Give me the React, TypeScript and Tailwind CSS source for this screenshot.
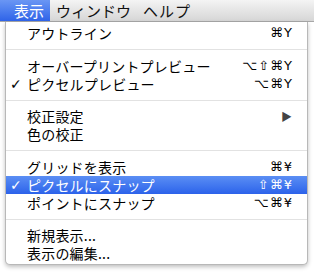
import { Fragment } from 'react';

type Item =
  | { kind: 'sep'; h: number }
  | { kind: 'row'; label: string; key?: string; check?: boolean; active?: boolean; sub?: boolean };

const items: Item[] = [
  { kind: 'row', label: 'アウトライン', key: '⌘Y' },
  { kind: 'sep', h: 15 },
  { kind: 'row', label: 'オーバープリントプレビュー', key: '⌥⇧⌘Y' },
  { kind: 'row', label: 'ピクセルプレビュー', key: '⌥⌘Y', check: true },
  { kind: 'sep', h: 14 },
  { kind: 'row', label: '校正設定', sub: true },
  { kind: 'row', label: '色の校正' },
  { kind: 'sep', h: 15 },
  { kind: 'row', label: 'グリッドを表示', key: '⌘¥' },
  { kind: 'row', label: 'ピクセルにスナップ', key: '⇧⌘¥', check: true, active: true },
  { kind: 'row', label: 'ポイントにスナップ', key: '⌥⌘¥' },
  { kind: 'sep', h: 14 },
  { kind: 'row', label: '新規表示...' },
  { kind: 'row', label: '表示の編集...' },
];

const jp = "font-['Lucida_Grande','Noto_Sans_CJK_JP',sans-serif]";

export default function App() {
  return (
    <div className={`relative w-[314px] h-[275px] overflow-hidden bg-white ${jp}`}>
      {/* ── Menu bar ─────────────────────────────────────────── */}
      <div className="flex h-[22px] items-center bg-gradient-to-b from-[#f4f4f4] to-[#d6d6d6] border-b border-[#a8a8a8] text-[15px] leading-[21px] text-[#111]">
        <div className="flex h-full items-center bg-gradient-to-b from-[#6a96f4] to-[#2f63e8] pl-[14px] pr-[6px] text-white">
          表示
        </div>
        <div className="pl-[6px]">ウィンドウ</div>
        <div className="pl-[12px] tracking-[1px]">ヘルプ</div>
      </div>

      {/* ── Dropdown ─────────────────────────────────────────── */}
      <div className="ml-[5px] w-[303px] h-[243px] pt-[2px] bg-white border-x border-b border-[#b8b8b8] rounded-b-[5px] shadow-[0_2px_4px_rgba(0,0,0,0.25)] text-[14px] text-black">
        {items.map((it, i) => (
          <Fragment key={i}>
            {it.kind === 'sep' ? (
              <div className="flex items-center" style={{ height: it.h }}>
                <div className="h-px w-full bg-[#e2e2e2]" />
              </div>
            ) : (
              <div
                className={`flex h-[18px] items-center pr-[14px] leading-[18px] ${
                  it.active ? 'bg-gradient-to-b from-[#5b8ef4] to-[#2c62ea] text-white' : ''
                }`}
              >
                <span className="w-[21px] pl-[4px] text-[14px] font-bold font-['DejaVu_Sans',sans-serif]">
                  {it.check ? '✓' : ''}
                </span>
                <span className="flex-1 tracking-[0.2px]">{it.label}</span>
                {it.key && (
                  <span className="text-[13px] font-['DejaVu_Sans',sans-serif] tracking-[1px]">{it.key}</span>
                )}
                {it.sub && <span className="text-[11px] text-[#444] pr-[1px]">▶</span>}
              </div>
            )}
          </Fragment>
        ))}
      </div>
    </div>
  );
}
